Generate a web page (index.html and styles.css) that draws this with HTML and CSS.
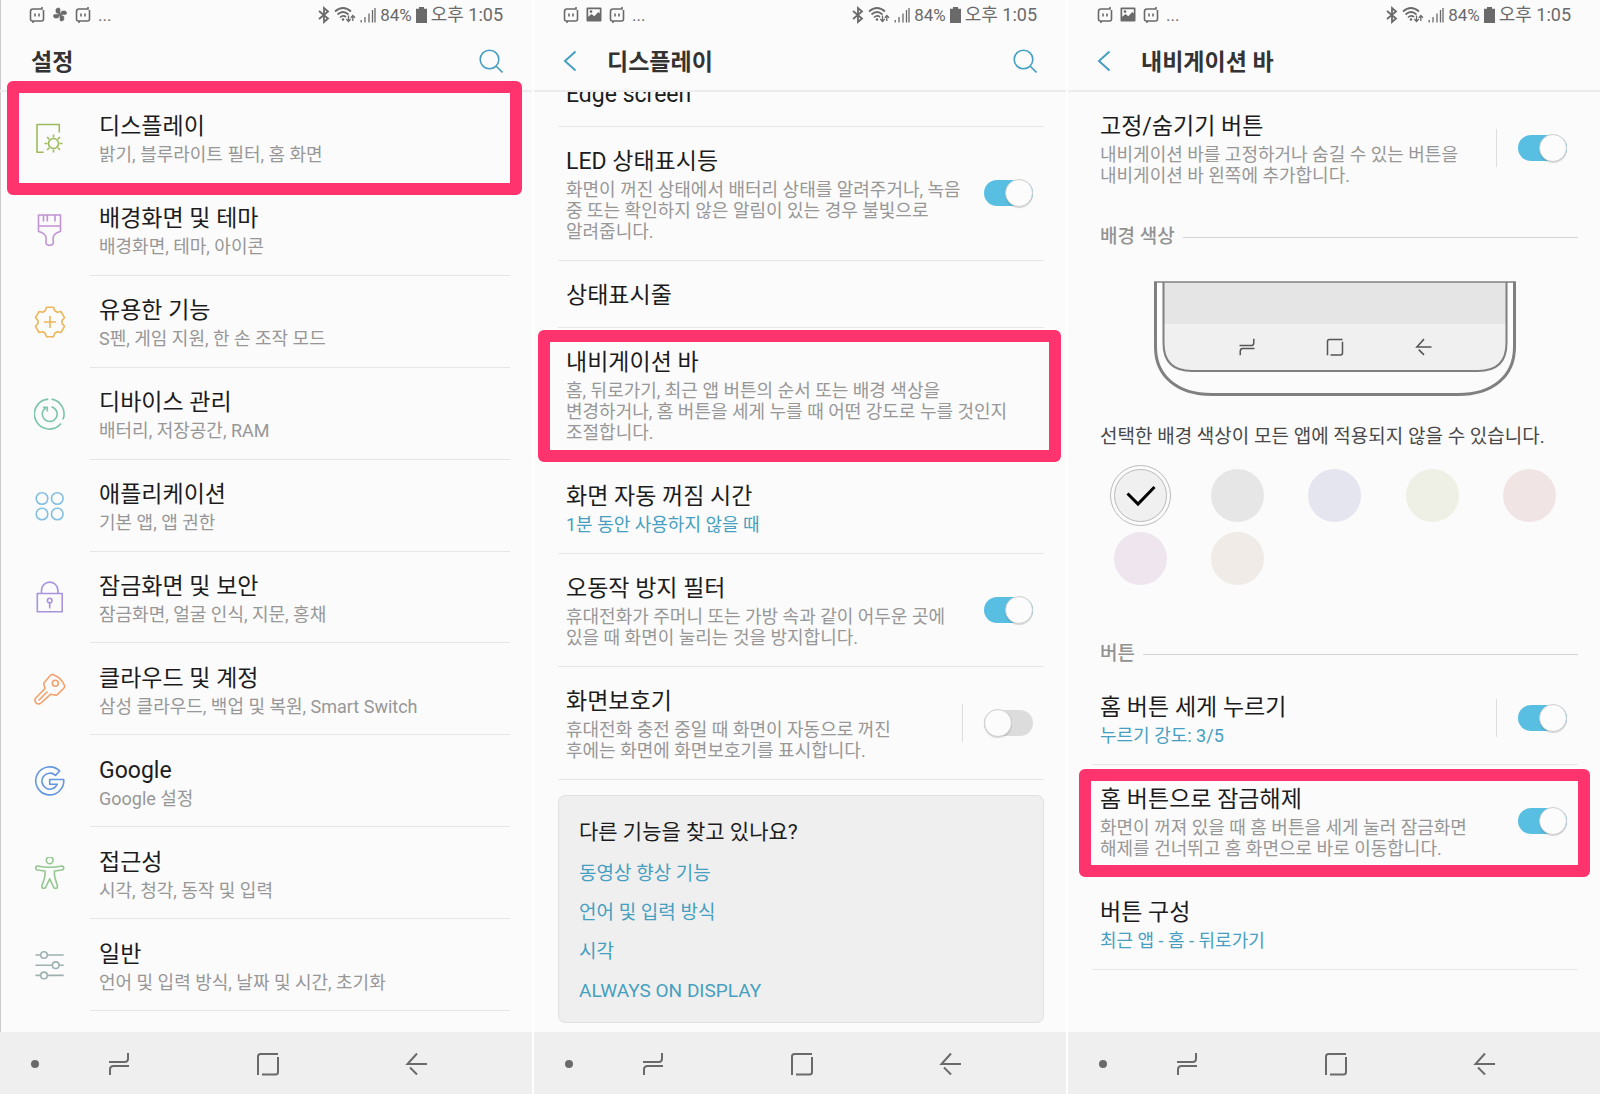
FILE: index.html
```html
<!DOCTYPE html>
<html lang="ko">
<head>
<meta charset="utf-8">
<meta name="viewport" content="width=device-width, initial-scale=1">
<title>설정</title>
<link rel="stylesheet" href="styles.css">
</head>
<body>
<svg class="sprite" aria-hidden="true">
  <symbol id="i-chat" viewBox="0 0 16 18"><path d="M13 1v2H4Q1.500 3 1.500 5.500V13Q1.500 15 3.500 15H4v2M4 15h8.500q2 0 2-2V4M6 7.500v3M10 7.500v3" fill="none" stroke="currentColor" stroke-width="1.600"/></symbol>
  <symbol id="i-fan" viewBox="0 0 16 18"><path d="M8 8.500V3.500Q8 1.500 6 2l-2 1v3.500L8 8.500ZM8 8.500h5q2 0 1.600-1.900L13.500 5H10ZM8 8.500v5q0 2 2 1.500l1.800-1v-3.500ZM8 8.500H3Q.9 8.600 1.500 10.500L2.600 12H6Z" fill="currentColor" stroke="currentColor" stroke-width=".6"/></symbol>
  <symbol id="i-image" viewBox="0 0 16 18"><path fill-rule="evenodd" d="M1.500 1.500h13q1 0 1 1v12q0 1-1 1h-13q-1 0-1-1v-12q0-1 1-1ZM2.200 3.200v7.600L5.500 8l2.800 2.200L12.300 6l1.500 1.500V3.200ZM5 4.200a1.300 1.300 0 1 1 0 2.700 1.300 1.300 0 0 1 0-2.700Z" fill="currentColor"/></symbol>
  <symbol id="i-bluetooth" viewBox="0 0 12 18"><path d="M1 5l9 7.500L6 16V2l4 3.500L1 13" fill="none" stroke="currentColor" stroke-width="1.800"/></symbol>
  <symbol id="i-wifi" viewBox="0 0 22 18"><path d="M1 5.500Q9-1.500 17 5.500M3.500 8.500Q9 3.500 14.500 8.500M6 11.500Q9 8.500 12 11" fill="none" stroke="currentColor" stroke-width="1.700"/><circle cx="9" cy="13.500" r="1.300" fill="currentColor"/><path d="M14.500 9.500v6M12.300 13l2.200 2.600L16.700 13M18.800 15V9.500M16.800 11.800l2-2.400 2.200 2.400" fill="none" stroke="currentColor" stroke-width="1.300"/></symbol>
  <symbol id="i-signal" viewBox="0 0 16 18"><path d="M1.200 14v2.500M5 11v5.500M9 7.500v9M12.500 4v12.500M15 2v14.500" fill="none" stroke="currentColor" stroke-width="1.300"/></symbol>
  <symbol id="i-battery" viewBox="0 0 11 18"><path d="M3 1h5v1.800h3V17H0V2.800h3Z" fill="currentColor"/></symbol>
  <symbol id="i-search" viewBox="0 0 24 24"><circle cx="10.500" cy="10.500" r="9.300"/><path d="M17 17l6.500 6.500"/></symbol>
  <symbol id="i-back" viewBox="0 0 14 22"><path d="M12.500 1.500L2 11l10.500 9.500"/></symbol>
  <symbol id="n-recent" viewBox="0 0 24 24"><path d="M2 10h15.500q3.500 0 3.500-3.500V1M22 14H6.500Q3 14 3 17.500V23"/></symbol>
  <symbol id="n-home" viewBox="0 0 24 24"><path d="M2 23V4.500Q2 2 4.500 2H22M22 5v15q0 2.500-2.500 2.500H6"/></symbol>
  <symbol id="n-back" viewBox="0 0 24 24"><path d="M22 12H2.500L12 1.500M2.500 12v1M5 15.500L12 22.500"/></symbol>
</svg>

<main class="screens">
  <!-- 설정 -->
  <section class="screen screen-first">
    <div class="status">
      <svg class="s16"><use href="#i-chat"/></svg><svg class="s16"><use href="#i-fan"/></svg><svg class="s16"><use href="#i-chat"/></svg><span>...</span>
      <div class="status-right"><svg class="s12"><use href="#i-bluetooth"/></svg><svg class="s22"><use href="#i-wifi"/></svg><svg class="s16"><use href="#i-signal"/></svg><span>84%</span><svg class="s11"><use href="#i-battery"/></svg><span class="clock">오후 1:05</span></div>
    </div>
    <header class="bar">
      <h1>설정</h1>
      <button class="icon-btn" type="button" aria-label="검색"><svg class="s24"><use href="#i-search"/></svg></button>
    </header>
    <nav class="menu">
      <a class="item marked mark-display" href="#display"><svg class="item-icon green" viewBox="0 0 32 32"><path d="M25.300 10.500V2.500H3v27.700h6.700"/><circle cx="19.500" cy="21.500" r="5"/><path d="M19.500 12.500v3M19.500 27.500v3M10.500 21.500h3M25.500 21.500h3M13.100 15.100l2.200 2.200M23.700 25.700l2.200 2.200M25.900 15.100l-2.200 2.200M15.300 25.700l-2.200 2.200"/></svg><span class="item-text"><strong>디스플레이</strong><small>밝기, 블루라이트 필터, 홈 화면</small></span></a>
      <a class="item" href="#theme"><svg class="item-icon purple" viewBox="0 0 32 32"><path d="M4.500 1h22v16.500Q23 18 20.500 20.500 18.500 22.500 19.300 27q.6 4.300-3.700 4.300T12 27q.7-4.500-1.400-6.500Q8 18 4.500 17.500ZM4.500 12h22M9.500 1v6.500M13.300 1v6.500M21 1v6.500"/></svg><span class="item-text"><strong>배경화면 및 테마</strong><small>배경화면, 테마, 아이콘</small></span></a>
      <a class="item" href="#features"><svg class="item-icon amber" viewBox="0 0 32 32"><path d="M11.200 4.800L12.500 1.300H19.500L20.800 4.800 23.300 6.200 26.900 5.500 30.500 11.700 28 14.600V17.400L30.500 20.300 26.900 26.500 23.300 25.800 20.800 27.200 19.500 30.700H12.500L11.200 27.200 8.700 25.800 5.100 26.500 1.500 20.300 4 17.400V14.600L1.500 11.700 5.100 5.500 8.700 6.200ZM16 10v12M10 16h12"/></svg><span class="item-text"><strong>유용한 기능</strong><small>S펜, 게임 지원, 한 손 조작 모드</small></span></a>
      <a class="item" href="#device"><svg class="item-icon teal" viewBox="0 0 32 32"><path d="M14.300 1.100A15 15 0 1 0 27 25.600M29 21.500A15 15 0 0 0 17.500 1.100M17.500 8.900A7.400 7.400 0 1 1 12 9.700M9 9.300h4.300v4.300"/></svg><span class="item-text"><strong>디바이스 관리</strong><small>배터리, 저장공간, RAM</small></span></a>
      <a class="item" href="#apps"><svg class="item-icon blue" viewBox="0 0 32 32"><circle cx="8" cy="8.500" r="5.800"/><circle cx="23.300" cy="8.500" r="5.800"/><circle cx="8" cy="24" r="5.800"/><circle cx="23.300" cy="24" r="5.800"/></svg><span class="item-text"><strong>애플리케이션</strong><small>기본 앱, 앱 권한</small></span></a>
      <a class="item" href="#lock"><svg class="item-icon violet" viewBox="0 0 32 32"><path d="M3.300 12.500h24.900v18.200H3.300ZM7.500 12.500V9.300a8.200 8.200 0 0 1 16.400 0v3.200M15.700 22v5.500"/><circle cx="15.700" cy="19.600" r="2.300"/></svg><span class="item-text"><strong>잠금화면 및 보안</strong><small>잠금화면, 얼굴 인식, 지문, 홍채</small></span></a>
      <a class="item" href="#cloud"><svg class="item-icon orange" viewBox="0 0 32 32"><path d="M10.300 9.500L16.500 2.200Q17.700 1 19.300 1.700 27.500 4.500 30.500 12.500 31 14 30 15L23.500 21.500Q22.500 22.500 21 22L16.500 21.300 7 30Q4.500 32 2 30 0 27.500 1.800 25L11 15.500 9.800 11.300Q9.600 10.300 10.300 9.500ZM4.500 27.500L13.500 18.500"/><circle cx="21.300" cy="10.200" r="3"/></svg><span class="item-text"><strong>클라우드 및 계정</strong><small>삼성 클라우드, 백업 및 복원, Smart Switch</small></span></a>
      <a class="item" href="#google"><svg class="item-icon royal" viewBox="0 0 32 32"><path d="M25.700 6A14 14 0 1 0 29.700 14.500H15.700V19.300H23.300A8 8 0 1 1 21.500 10.400Z"/></svg><span class="item-text"><strong>Google</strong><small>Google 설정</small></span></a>
      <a class="item" href="#access"><svg class="item-icon leaf" viewBox="0 0 32 32"><circle cx="15.700" cy="3.300" r="3.400"/><path d="M3.500 9Q15.700 11.500 27.900 9 29.700 9 29.700 11 29.700 12.700 28 13L20.500 14Q20 17.500 21.300 22L23.500 29Q23.700 31.300 21.700 31.500 20 31.500 19.300 29.500L15.700 21.800 12 29.500Q11.300 31.500 9.500 31.500 7.500 31 7.800 29L10.200 22Q11.500 17.500 11 14L3.300 13Q1.700 12.700 1.700 11 1.700 9 3.500 9Z"/></svg><span class="item-text"><strong>접근성</strong><small>시각, 청각, 동작 및 입력</small></span></a>
      <a class="item" href="#general"><svg class="item-icon slate" viewBox="0 0 32 32"><path d="M1.500 6h5.200M13.300 6h16.400M1.500 16.200h16.900M25 16.200h4.700M1.500 26.400h5.200M13.300 26.400h16.400"/><circle cx="10" cy="6" r="3.300"/><circle cx="21.700" cy="16.200" r="3.300"/><circle cx="10" cy="26.400" r="3.300"/></svg><span class="item-text"><strong>일반</strong><small>언어 및 입력 방식, 날짜 및 시간, 초기화</small></span></a>
    </nav>
    <div class="navbar"><span class="dot"></span><button type="button" aria-label="최근 앱"><svg class="s24"><use href="#n-recent"/></svg></button><button type="button" aria-label="홈"><svg class="s24"><use href="#n-home"/></svg></button><button type="button" aria-label="뒤로가기"><svg class="s24"><use href="#n-back"/></svg></button></div>
  </section>

  <!-- 디스플레이 -->
  <section class="screen">
    <div class="status">
      <svg class="s16"><use href="#i-chat"/></svg><svg class="s16"><use href="#i-image"/></svg><svg class="s16"><use href="#i-chat"/></svg><span>...</span>
      <div class="status-right"><svg class="s12"><use href="#i-bluetooth"/></svg><svg class="s22"><use href="#i-wifi"/></svg><svg class="s16"><use href="#i-signal"/></svg><span>84%</span><svg class="s11"><use href="#i-battery"/></svg><span class="clock">오후 1:05</span></div>
    </div>
    <header class="bar">
      <button class="icon-btn back" type="button" aria-label="뒤로"><svg class="chevron"><use href="#i-back"/></svg></button>
      <h1>디스플레이</h1>
      <button class="icon-btn" type="button" aria-label="검색"><svg class="s24"><use href="#i-search"/></svg></button>
    </header>
    <div class="viewport">
      <div class="rows scrolled">
        <div class="row single"><div class="row-text"><strong>Edge screen</strong></div></div>
        <div class="row"><label class="row-text" for="led"><strong>LED 상태표시등</strong><small>화면이 꺼진 상태에서 배터리 상태를 알려주거나, 녹음 중 또는 확인하지 않은 알림이 있는 경우 불빛으로 알려줍니다.</small></label><input class="toggle" type="checkbox" id="led" checked></div>
        <div class="row single"><div class="row-text"><strong>상태표시줄</strong></div></div>
        <div class="row marked mark-nav"><div class="row-text"><strong>내비게이션 바</strong><small>홈, 뒤로가기, 최근 앱 버튼의 순서 또는 배경 색상을 변경하거나, 홈 버튼을 세게 누를 때 어떤 강도로 누를 것인지 조절합니다.</small></div></div>
        <div class="row"><div class="row-text"><strong>화면 자동 꺼짐 시간</strong><small class="value">1분 동안 사용하지 않을 때</small></div></div>
        <div class="row"><label class="row-text" for="filter"><strong>오동작 방지 필터</strong><small>휴대전화가 주머니 또는 가방 속과 같이 어두운 곳에 있을 때 화면이 눌리는 것을 방지합니다.</small></label><input class="toggle" type="checkbox" id="filter" checked></div>
        <div class="row"><label class="row-text" for="saver"><strong>화면보호기</strong><small>휴대전화 충전 중일 때 화면이 자동으로 꺼진 후에는 화면에 화면보호기를 표시합니다.</small></label><span class="rule"></span><input class="toggle" type="checkbox" id="saver"></div>
      </div>
      <aside class="card">
        <h2>다른 기능을 찾고 있나요?</h2>
        <a href="#video">동영상 향상 기능</a>
        <a href="#language">언어 및 입력 방식</a>
        <a href="#vision">시각</a>
        <a href="#aod">ALWAYS ON DISPLAY</a>
      </aside>
    </div>
    <div class="navbar"><span class="dot"></span><button type="button" aria-label="최근 앱"><svg class="s24"><use href="#n-recent"/></svg></button><button type="button" aria-label="홈"><svg class="s24"><use href="#n-home"/></svg></button><button type="button" aria-label="뒤로가기"><svg class="s24"><use href="#n-back"/></svg></button></div>
  </section>

  <!-- 내비게이션 바 -->
  <section class="screen">
    <div class="status">
      <svg class="s16"><use href="#i-chat"/></svg><svg class="s16"><use href="#i-image"/></svg><svg class="s16"><use href="#i-chat"/></svg><span>...</span>
      <div class="status-right"><svg class="s12"><use href="#i-bluetooth"/></svg><svg class="s22"><use href="#i-wifi"/></svg><svg class="s16"><use href="#i-signal"/></svg><span>84%</span><svg class="s11"><use href="#i-battery"/></svg><span class="clock">오후 1:05</span></div>
    </div>
    <header class="bar">
      <button class="icon-btn back" type="button" aria-label="뒤로"><svg class="chevron"><use href="#i-back"/></svg></button>
      <h1>내비게이션 바</h1>
    </header>
    <div class="viewport">
      <div class="rows">
        <div class="row plain"><label class="row-text" for="pin"><strong>고정/숨기기 버튼</strong><small>내비게이션 바를 고정하거나 숨길 수 있는 버튼을 내비게이션 바 왼쪽에 추가합니다.</small></label><span class="rule"></span><input class="toggle" type="checkbox" id="pin" checked></div>
      </div>
      <h2 class="section">배경 색상</h2>
      <svg class="phone" viewBox="0 0 362 116" aria-hidden="true">
        <path d="M9.500 1V62Q9.500 90 38 90H324Q352.500 90 352.500 62V1Z" fill="#f0f0f0"/>
        <path d="M9.500 1H352.500V43H9.500Z" fill="#e5e5e5"/>
        <path d="M9.500 1V62Q9.500 90 38 90H324Q352.500 90 352.500 62V1" fill="none" stroke="#808080" stroke-width="2"/>
        <path d="M0 1H362" stroke="#808080" stroke-width="1.500"/>
        <path d="M5 2V62M357 2V62" stroke="#fff" stroke-width="4"/>
        <path d="M1.500 1V66C1.500 95 23 113.500 58 113.500H304C339 113.500 360.500 95 360.500 66V1" fill="none" stroke="#808080" stroke-width="3"/>
        <g fill="none" stroke="#555" stroke-width="2"><svg x="84" y="57" width="18" height="18"><use href="#n-recent"/></svg><svg x="172" y="57" width="18" height="18"><use href="#n-home"/></svg><svg x="261" y="57" width="18" height="18"><use href="#n-back"/></svg></g>
      </svg>
      <p class="note">선택한 배경 색상이 모든 앱에 적용되지 않을 수 있습니다.</p>
      <div class="swatches">
        <label class="swatch"><input type="radio" name="color" aria-label="흰색" checked><svg viewBox="0 0 30 22"><path d="M1.500 8.500L12 19 28.500 2"/></svg></label>
        <label class="swatch c-gray"><input type="radio" name="color" aria-label="회색"></label>
        <label class="swatch c-blue"><input type="radio" name="color" aria-label="파란색"></label>
        <label class="swatch c-olive"><input type="radio" name="color" aria-label="연두색"></label>
        <label class="swatch c-rose"><input type="radio" name="color" aria-label="분홍색"></label>
        <label class="swatch c-lilac"><input type="radio" name="color" aria-label="보라색"></label>
        <label class="swatch c-sand"><input type="radio" name="color" aria-label="베이지색"></label>
      </div>
      <h2 class="section">버튼</h2>
      <div class="rows">
        <div class="row"><label class="row-text" for="press"><strong>홈 버튼 세게 누르기</strong><small class="value">누르기 강도: 3/5</small></label><span class="rule"></span><input class="toggle" type="checkbox" id="press" checked></div>
        <div class="row marked mark-unlock"><label class="row-text" for="unlock"><strong>홈 버튼으로 잠금해제</strong><small>화면이 꺼져 있을 때 홈 버튼을 세게 눌러 잠금화면 해제를 건너뛰고 홈 화면으로 바로 이동합니다.</small></label><input class="toggle" type="checkbox" id="unlock" checked></div>
        <div class="row"><div class="row-text"><strong>버튼 구성</strong><small class="value">최근 앱 - 홈 - 뒤로가기</small></div></div>
      </div>
    </div>
    <div class="navbar"><span class="dot"></span><button type="button" aria-label="최근 앱"><svg class="s24"><use href="#n-recent"/></svg></button><button type="button" aria-label="홈"><svg class="s24"><use href="#n-home"/></svg></button><button type="button" aria-label="뒤로가기"><svg class="s24"><use href="#n-back"/></svg></button></div>
  </section>
</main>
</body>
</html>
```
FILE: styles.css
```css
*, *::before, *::after { box-sizing: border-box; }

body {
  margin: 0;
  background: #fff;
  color: #1c1c1c;
  font-family: Roboto, "Noto Sans CJK KR", sans-serif;
  word-break: keep-all;
}

svg { display: block; flex: none; }
.sprite { position: absolute; width: 0; height: 0; }
.s11 { width: 11px; height: 18px; }
.s12 { width: 12px; height: 18px; }
.s16 { width: 16px; height: 18px; }
.s22 { width: 22px; height: 18px; }
.s24 { width: 24px; height: 24px; }
.chevron { width: 14px; height: 22px; }

button {
  padding: 0;
  border: 0;
  background: none;
  color: inherit;
  font: inherit;
}

a { color: inherit; text-decoration: none; }

.screens {
  display: grid;
  grid-template-columns: repeat(3, 1fr);
  gap: 2px;
  min-height: 100vh;
}

.screen {
  display: flex;
  flex-direction: column;
  min-width: 0;
  background: #fbfbfb;
}

.screen-first { box-shadow: inset 1px 0 #ccc; }

/* Status bar */
.status {
  display: flex;
  align-items: center;
  gap: 7px;
  height: 30px;
  padding: 0 29px;
  color: #6a6a6a;
  font-size: 17px;
  line-height: 30px;
}

.status-right {
  display: flex;
  align-items: center;
  gap: 4px;
  margin-left: auto;
}

.clock { font-size: 18px; }

/* Title bar */
.bar {
  display: flex;
  align-items: center;
  height: 62px;
  padding: 2px 29px 0;
  border-bottom: 2px solid #ececec;
}

.bar h1 {
  flex: 1;
  margin: 0;
  padding: 3px 0 0 2px;
  color: #333;
  font-size: 23px;
  font-weight: 700;
  line-height: 36px;
}

.icon-btn {
  color: #469fc0;
  fill: none;
  stroke: currentColor;
  stroke-width: 1.6;
}

.back { margin-right: 28px; stroke-width: 2; }

/* Text shared by every list entry */
strong {
  display: block;
  padding-top: 1px;
  font-size: 23px;
  font-weight: 400;
  line-height: 34px;
}

small {
  display: block;
  color: #979797;
  font-size: 18px;
  line-height: 21px;
}

small.value { color: #469fc0; }

/* Main menu */
.menu {
  display: grid;
  flex: 1;
  grid-auto-rows: 1fr;
  padding: 0 22px 21px 34px;
}

.item {
  position: relative;
  display: flex;
  align-items: center;
  gap: 24px;
}

.item-icon {
  width: 32px;
  height: 32px;
  fill: none;
  stroke: currentColor;
  stroke-width: 1.6;
  stroke-linejoin: round;
}

.item-text {
  display: flex;
  flex: 1;
  flex-direction: column;
  align-self: stretch;
  justify-content: center;
  padding-left: 9px;
  border-bottom: 1px solid #e6e6e6;
}

.green { color: #9bbb5c; }
.purple { color: #c293d3; }
.amber { color: #edb658; }
.teal { color: #7cc4b0; }
.blue { color: #82bfe0; }
.violet { color: #a893de; }
.orange { color: #f2a06c; }
.royal { color: #6496de; }
.leaf { color: #93c690; }
.slate { color: #9fb0b3; }

/* Callout frames around entries */
.marked::after {
  content: "";
  position: absolute;
  z-index: 1;
  border: 12px solid #ff346e;
  border-radius: 6px;
  pointer-events: none;
}

.mark-display::after { inset: -11px -12px -11px -27px; }
.mark-nav::after { inset: 2px -17px -1px -20px; }
.mark-unlock::after { inset: 4px -12px 0 -13px; }

.mark-display .item-text,
.row.marked { border-bottom-color: transparent; }

/* Detail screens */
.viewport {
  flex: 1;
  min-height: 0;
  padding: 0 22px 0 24px;
  overflow: hidden;
}

.scrolled { margin-top: -32px; }

.row {
  position: relative;
  display: flex;
  align-items: center;
  padding: 17px 11px 18px 8px;
  border-bottom: 1px solid #e6e6e6;
}

.row.single { padding-bottom: 14px; }
.row.plain { border-bottom-color: transparent; }
.row-text { flex: 1; padding-right: 12px; }

.rule {
  width: 1px;
  height: 38px;
  margin: 0 21px 0 10px;
  background: #dedede;
}

.toggle {
  appearance: none;
  flex: none;
  width: 49px;
  height: 26px;
  margin: 0;
  border-radius: 13px;
  background: #dcdcdc;
}

.toggle::before {
  content: "";
  display: block;
  width: 28px;
  height: 28px;
  margin-top: -1px;
  border: 1px solid #cfcfcf;
  border-radius: 50%;
  background: #fcfcfc;
  box-shadow: 0 1px 1px rgba(0, 0, 0, .15);
}

.toggle:checked { background: #58bfe2; }
.toggle:checked::before { margin-left: 21px; }

.card {
  margin: 15px 0 8px;
  padding: 17px 20px 12px;
  border: 1px solid #e1e1e1;
  border-radius: 7px;
  background: #efefef;
}

.card h2 {
  margin: 0 0 2px;
  font-size: 21px;
  font-weight: 400;
  line-height: 39px;
}

.card a {
  display: block;
  color: #469fc0;
  font-size: 19px;
  line-height: 39px;
}

.section {
  display: flex;
  align-items: center;
  gap: 8px;
  margin: 19px 0 6px;
  padding-left: 8px;
  color: #929292;
  font-size: 19px;
  font-weight: 500;
  line-height: 26px;
}

.section::after {
  content: "";
  flex: 1;
  height: 1px;
  background: #d2d2d2;
}

.phone {
  width: 362px;
  height: 116px;
  margin: 31px auto 0;
}

.note {
  margin: 25px 0 0;
  padding-left: 8px;
  color: #484848;
  font-size: 19px;
  line-height: 30px;
}

.swatches {
  display: grid;
  grid-template-columns: repeat(5, 1fr);
  grid-auto-rows: 63px;
  place-items: center;
  margin: 12px 0 51px;
}

.swatch {
  display: grid;
  place-items: center;
  width: 53px;
  height: 53px;
  border-radius: 50%;
  background: #f0f0f0;
}

.swatch input {
  appearance: none;
  grid-area: 1 / 1;
  width: 53px;
  height: 53px;
  margin: 0;
  border-radius: 50%;
}

.swatch input:checked {
  border: 1px solid #bbb;
  outline: 1px solid #bbb;
  outline-offset: 3px;
}

.swatch svg {
  grid-area: 1 / 1;
  width: 30px;
  height: 22px;
  fill: none;
  stroke: #000;
  stroke-width: 3;
}

.c-gray { background: #e6e6e6; }
.c-blue { background: #e5e5f0; }
.c-olive { background: #eff0e5; }
.c-rose { background: #f0e5e4; }
.c-lilac { background: #efe5ef; }
.c-sand { background: #f0ebe6; }

/* System navigation */
.navbar {
  display: flex;
  align-items: center;
  height: 62px;
  padding: 2px 40px 0 31px;
  background: #efefef;
  color: #6a6a6a;
}

.navbar button {
  display: flex;
  flex: 1;
  justify-content: center;
  fill: none;
  stroke: currentColor;
  stroke-width: 2;
}

.dot {
  width: 8px;
  height: 8px;
  margin-right: 5px;
  border-radius: 50%;
  background: #6a6a6a;
}
```
